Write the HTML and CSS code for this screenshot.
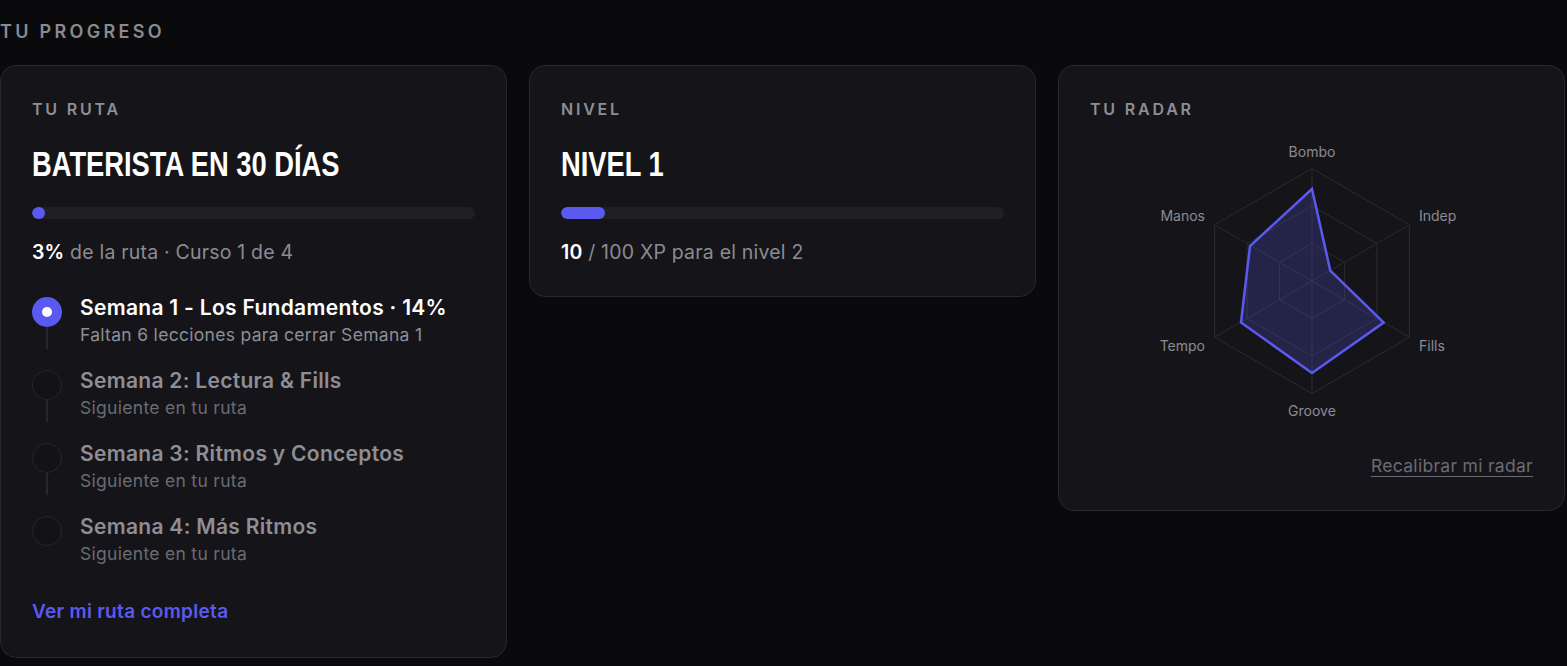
FILE: index.html
```html
<!DOCTYPE html>
<html lang="es">
<head>
<meta charset="utf-8">
<title>Tu progreso</title>
<link rel="stylesheet" href="styles.css">
</head>
<body>
<section class="progress">
  <h2 class="section-title">TU PROGRESO</h2>
  <div class="cards">
    <article class="card">
      <div class="card-label">TU RUTA</div>
      <h3 class="card-heading"><span class="heading-text">BATERISTA EN 30 DÍAS</span></h3>
      <div class="bar"><div class="bar-fill bar-fill-min" style="width:3%"></div></div>
      <p class="meta"><strong>3%</strong> de la ruta · Curso 1 de 4</p>
      <ol class="weeks">
        <li class="week week-active">
          <div class="marker"><span class="dot"></span><span class="line"></span></div>
          <div class="week-text">
            <div class="week-title">Semana 1 - Los Fundamentos · 14%</div>
            <div class="week-sub">Faltan 6 lecciones para cerrar Semana 1</div>
          </div>
        </li>
        <li class="week">
          <div class="marker"><span class="dot"></span><span class="line"></span></div>
          <div class="week-text">
            <div class="week-title">Semana 2: Lectura &amp; Fills</div>
            <div class="week-sub">Siguiente en tu ruta</div>
          </div>
        </li>
        <li class="week">
          <div class="marker"><span class="dot"></span><span class="line"></span></div>
          <div class="week-text">
            <div class="week-title">Semana 3: Ritmos y Conceptos</div>
            <div class="week-sub">Siguiente en tu ruta</div>
          </div>
        </li>
        <li class="week week-last">
          <div class="marker"><span class="dot"></span></div>
          <div class="week-text">
            <div class="week-title">Semana 4: Más Ritmos</div>
            <div class="week-sub">Siguiente en tu ruta</div>
          </div>
        </li>
      </ol>
      <a class="route-link" href="#">Ver mi ruta completa</a>
    </article>

    <article class="card card-short">
      <div class="card-label">NIVEL</div>
      <h3 class="card-heading"><span class="heading-text">NIVEL 1</span></h3>
      <div class="bar"><div class="bar-fill" style="width:10%"></div></div>
      <p class="meta"><strong>10</strong> / 100 XP para el nivel 2</p>
    </article>

    <article class="card card-radar">
      <div class="card-label">TU RADAR</div>
      <svg class="radar" width="320" height="300" viewBox="0 0 320 300">
        <g fill="none" stroke="#2a2a2f" stroke-width="1">
          <polygon points="160,37.5 257.4,93.75 257.4,206.25 160,262.5 62.6,206.25 62.6,93.75"/>
          <polygon points="160,75 224.95,112.5 224.95,187.5 160,225 95.05,187.5 95.05,112.5"/>
          <polygon points="160,112.5 192.48,131.25 192.48,168.75 160,187.5 127.52,168.75 127.52,131.25"/>
          <line x1="160" y1="150" x2="160" y2="37.5"/>
          <line x1="160" y1="150" x2="257.4" y2="93.75"/>
          <line x1="160" y1="150" x2="257.4" y2="206.25"/>
          <line x1="160" y1="150" x2="160" y2="262.5"/>
          <line x1="160" y1="150" x2="62.6" y2="206.25"/>
          <line x1="160" y1="150" x2="62.6" y2="93.75"/>
        </g>
        <polygon points="160,58 178.3,139.7 231.7,191.5 160,242 89,191.5 98,115" fill="rgba(90,90,240,0.22)" stroke="#5a5af0" stroke-width="2.5" stroke-linejoin="miter"/>
        <g class="radar-labels" font-size="14" fill="#8b8b92">
          <text x="160" y="26" text-anchor="middle">Bombo</text>
          <text x="267" y="90" text-anchor="start">Indep</text>
          <text x="267" y="220" text-anchor="start">Fills</text>
          <text x="160" y="285" text-anchor="middle">Groove</text>
          <text x="53" y="220" text-anchor="end">Tempo</text>
          <text x="53" y="90" text-anchor="end">Manos</text>
        </g>
      </svg>
      <div class="radar-footer"><a class="recalibrate" href="#">Recalibrar mi radar</a></div>
    </article>
  </div>
</section>
</body>
</html>
```

FILE: styles.css
```css
* { box-sizing: border-box; }

html, body {
  margin: 0;
  padding: 0;
  background: #0a0a0c;
  color: #ffffff;
  font-family: Inter, "Noto Sans", "Liberation Sans", sans-serif;
}

.progress {
  padding: 20px 2px 0 0;
}

.section-title {
  margin: 0;
  font-size: 18px;
  line-height: 24px;
  font-weight: 600;
  letter-spacing: 3.3px;
  color: #8a8a90;
}

.cards {
  margin-top: 21px;
  display: grid;
  grid-template-columns: repeat(3, 1fr);
  column-gap: 22px;
  align-items: start;
}

.card {
  background: #151519;
  border: 1px solid #27272c;
  border-radius: 16px;
  padding: 31px 31px 32px;
}

.card-label {
  font-size: 16px;
  line-height: 20px;
  font-weight: 600;
  letter-spacing: 2.8px;
  color: #8e8e94;
  margin-top: 2px;
}

.card-heading {
  margin: 25px 0 0;
  font-family: "Liberation Sans", Arial, sans-serif;
  font-weight: 700;
  font-size: 35px;
  line-height: 40px;
  color: #ffffff;
  white-space: nowrap;
}

.heading-text {
  display: inline-block;
  transform: scaleX(0.78);
  transform-origin: left center;
}

.bar {
  margin-top: 23px;
  height: 12px;
  border-radius: 6px;
  background: #1f1f24;
  overflow: hidden;
}

.bar-fill {
  height: 100%;
  border-radius: 6px;
  background: #5a5af0;
}

.bar-fill-min { min-width: 12px; }

.meta {
  margin: 21px 0 0;
  font-size: 19.5px;
  line-height: 24px;
  letter-spacing: 0.2px;
  color: #8b8b92;
}

.meta strong {
  color: #ffffff;
  font-weight: 600;
}

.weeks {
  list-style: none;
  margin: 30px 0 0;
  padding: 0;
}

.week {
  display: grid;
  grid-template-columns: 30px 1fr;
  column-gap: 18px;
  padding-bottom: 21px;
}

.week-last { padding-bottom: 0; }

.marker {
  display: flex;
  flex-direction: column;
  align-items: center;
}

.dot {
  width: 30px;
  height: 30px;
  margin-top: 3px;
  border-radius: 50%;
  border: 1.5px solid #26262b;
  background: #131316;
  flex: none;
}

.week-active .dot {
  border: none;
  background: #5a5af0;
  display: flex;
  align-items: center;
  justify-content: center;
}

.week-active .dot::after {
  content: "";
  width: 10px;
  height: 10px;
  border-radius: 50%;
  background: #ffffff;
}

.line {
  flex: 1;
  width: 2px;
  margin-bottom: -3px;
  background: #26262b;
}

.week-title {
  font-size: 21px;
  line-height: 28px;
  font-weight: 600;
  letter-spacing: 0.3px;
  color: #8e8e94;
}

.week-active .week-title { color: #ffffff; }

.week-sub {
  margin-top: 2px;
  font-size: 17.5px;
  line-height: 22px;
  letter-spacing: 0.3px;
  color: #6b6b72;
}

.week-active .week-sub { color: #8e8e94; }

.route-link {
  display: block;
  margin-top: 34px;
  font-size: 19px;
  line-height: 26px;
  font-weight: 600;
  letter-spacing: 0.3px;
  color: #5a5af0;
  text-decoration: none;
}

.radar {
  display: block;
  margin: 12px auto 0;
  font-family: Inter, "Noto Sans", sans-serif;
}

.radar-footer {
  margin-top: 23px;
  display: flex;
  justify-content: flex-end;
}

.recalibrate {
  font-size: 17.5px;
  line-height: 24px;
  letter-spacing: 0.3px;
  color: #6b6b73;
  text-decoration: underline;
  text-underline-offset: 4px;
  text-decoration-thickness: 1px;
}
```
